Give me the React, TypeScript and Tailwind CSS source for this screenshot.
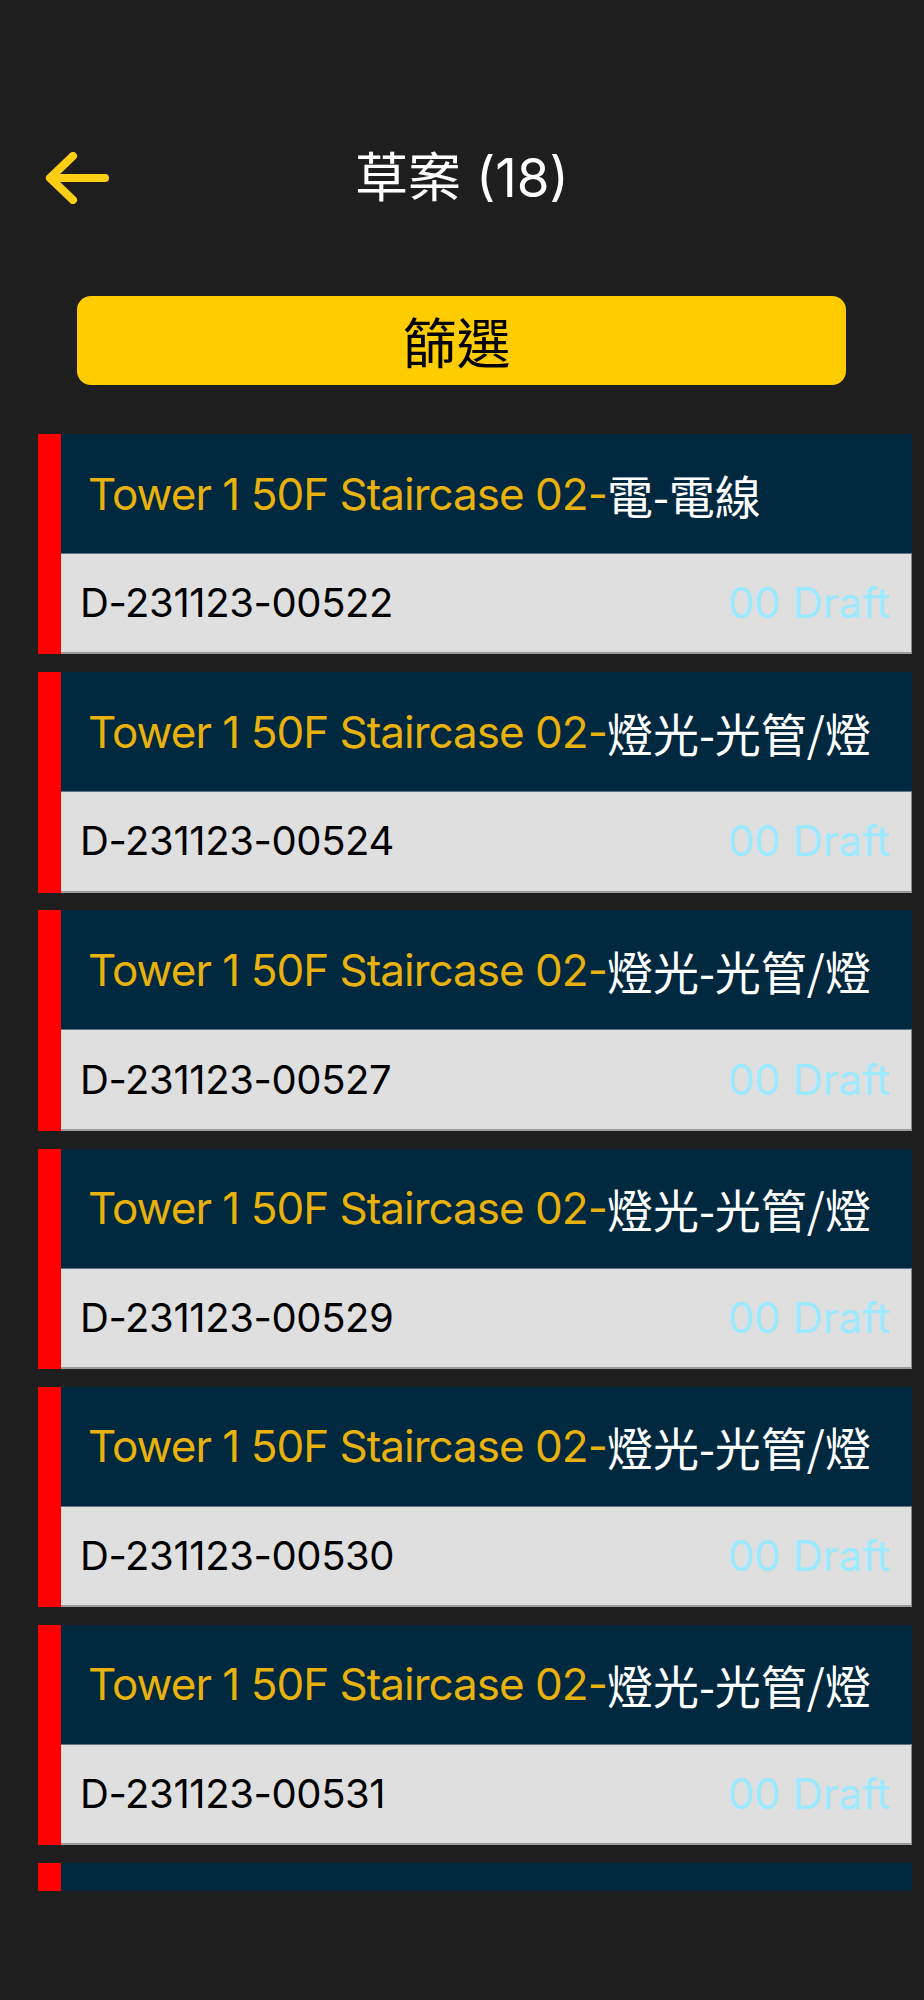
import React from "react";

const items = [
  { cjk: "電-電線", id: "D-231123-00522" },
  { cjk: "燈光-光管/燈", id: "D-231123-00524" },
  { cjk: "燈光-光管/燈", id: "D-231123-00527" },
  { cjk: "燈光-光管/燈", id: "D-231123-00529" },
  { cjk: "燈光-光管/燈", id: "D-231123-00530" },
  { cjk: "燈光-光管/燈", id: "D-231123-00531" },
];

const font = {
  fontFamily: '"Inter", "Noto Sans CJK TC", sans-serif',
};

export default function App() {
  return (
    <div
      className="w-[924px] h-[2000px] bg-[#1e1e1e] overflow-hidden flex flex-col"
      style={font}
    >
      {/* Header */}
      <div className="relative mt-[128px] h-[100px] flex items-center justify-center">
        <div className="absolute left-[45px] top-[24px]">
          <svg width="64" height="52" viewBox="0 0 64 52" fill="none">
            <path
              d="M60 26H5M28 4L5 26L28 48"
              stroke="#fccf14"
              strokeWidth="8"
              strokeLinecap="round"
              strokeLinejoin="round"
            />
          </svg>
        </div>
        <div className="text-white text-[53px] leading-none font-['Inter','Noto_Sans_CJK_TC',sans-serif]">
          草案 (18)
        </div>
      </div>

      {/* Filter button */}
      <div className="mt-[68px] ml-[77px] w-[769px] h-[89px] rounded-[14px] bg-[#ffcc00] flex items-center justify-center">
        <span className="text-black text-[54px] leading-none pr-[10px] font-['Noto_Sans_CJK_TC',sans-serif]">
          篩選
        </span>
      </div>

      {/* List */}
      <div className="mt-[49px] ml-[38px] w-[874px] h-[1457px] overflow-hidden flex flex-col gap-[17.8px]">
        {items.map((it, i) => (
          <div key={i} className="flex shrink-0">
            <div className="w-[23px] bg-[#ff0000] shrink-0" />
            <div className="flex-1 flex flex-col">
              <div className="h-[119px] bg-[#00283f] flex items-center pl-[27px] pr-[4px] overflow-hidden whitespace-nowrap">
                <span className="text-[44px] leading-none tracking-[-1px] text-[#e8b10c]">
                  Tower 1 50F Staircase 02-
                </span>
                <span className="text-[46px] leading-none text-white font-['Noto_Sans_CJK_TC',sans-serif]">
                  {it.cjk}
                </span>
              </div>
              <div className="h-[101.4px] bg-[#dfdfdf] border-t border-t-[#5d7383] border-r border-r-[#8a8a8a] border-b-2 border-b-[#9a9a9a] flex items-center justify-between pl-[19px] pr-[21px]">
                <span className="text-[40px] leading-none tracking-[-0.4px] text-black">{it.id}</span>
                <span className="text-[42px] leading-none text-[#9beaff]">00 Draft</span>
              </div>
            </div>
          </div>
        ))}
        <div className="flex shrink-0 h-[40px]">
          <div className="w-[23px] bg-[#ff0000] shrink-0" />
          <div className="flex-1 bg-[#00283f]" />
        </div>
      </div>
    </div>
  );
}
